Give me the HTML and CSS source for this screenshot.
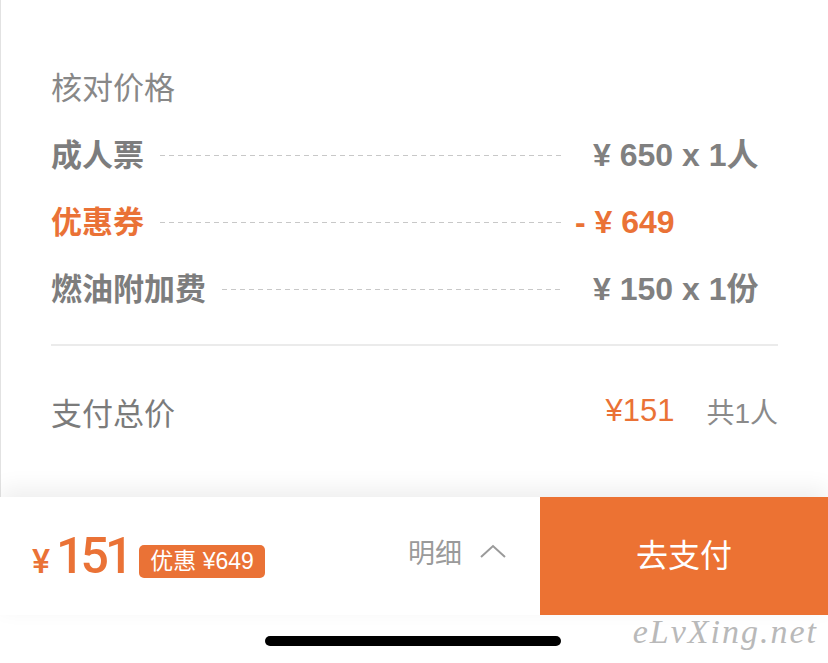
FILE: index.html
```html
<!DOCTYPE html>
<html lang="zh-CN">

<head>
    <meta charset="UTF-8">
    <meta name="viewport" content="width=device-width, initial-scale=1.0">
    <title>核对价格</title>
    <link rel="stylesheet" href="styles.css">
</head>

<body>
    <div class="page">
        <div class="sheet">
            <h2 class="title">核对价格</h2>

            <div class="row">
                <span class="label">成人票</span>
                <span class="dots"></span>
                <span class="value">¥ 650 x 1人</span>
            </div>
            <div class="row discount">
                <span class="label">优惠券</span>
                <span class="dots"></span>
                <span class="value"><span class="minus">- </span>¥ 649</span>
            </div>
            <div class="row">
                <span class="label">燃油附加费</span>
                <span class="dots"></span>
                <span class="value">¥ 150 x 1份</span>
            </div>

            <div class="divider"></div>

            <div class="total">
                <span class="total-label">支付总价</span>
                <span class="total-price">¥151</span>
                <span class="total-count">共1人</span>
            </div>
        </div>

        <div class="bar">
            <div class="bar-left">
                <span class="price"><span class="yen">¥</span>151</span>
                <span class="badge">优惠 ¥649</span>
            </div>
            <div class="detail">
                明细
                <svg class="chevron" width="26" height="14" viewBox="0 0 26 14">
                    <polyline points="1,13 13,2 25,13" fill="none" stroke="#9a9a9a" stroke-width="2" />
                </svg>
            </div>
            <button class="pay">去支付</button>
        </div>

        <div class="home">
            <div class="indicator"></div>
        </div>

        <div class="watermark">eLvXing.net</div>
    </div>
</body>

</html>
```

FILE: styles.css
```css
body {
    margin: 0;
    background: #ffffff;
    font-family: "Liberation Sans", "Noto Sans CJK SC", sans-serif;
    color: #7d7d7d;
}

.page {
    position: relative;
    width: 828px;
    height: 663px;
    overflow: hidden;
    display: flex;
    flex-direction: column;
}

.sheet {
    height: 497px;
    box-sizing: border-box;
    padding: 56px 50px 0 50px;
    border-left: 1px solid #e2e2e2;
}

.title {
    margin: 0;
    height: 66px;
    line-height: 66px;
    font-size: 31px;
    font-weight: 400;
    color: #888888;
}

.row {
    display: flex;
    align-items: center;
    height: 67px;
    line-height: 67px;
    font-size: 31px;
    font-weight: 700;
    color: #7d7d7d;
}

.row .label {
    white-space: nowrap;
}

.dots {
    flex: 1;
    height: 1px;
    margin: 0 30px 0 16px;
    background-image: linear-gradient(to right, #c8c8c8 56%, transparent 56%);
    background-size: 9px 1px;
}

.value {
    width: 185px;
    white-space: nowrap;
    font-size: 32px;
    color: #808080;
}

.discount,
.discount .value {
    color: #ea7236;
}

.minus {
    margin-left: -18px;
}

.divider {
    height: 2px;
    background: #ebebeb;
    margin-top: 21px;
}

.total {
    display: flex;
    align-items: center;
    height: 130px;
    font-size: 31px;
    color: #7b7b7b;
}

.total-label {
    flex: 1;
}

.total-price {
    color: #ea7236;
    margin-right: 32px;
}

.total-count {
    font-size: 28px;
    color: #8a8a8a;
}

.bar {
    display: flex;
    align-items: stretch;
    height: 118px;
    background: #ffffff;
    box-shadow: 0 -8px 22px rgba(0, 0, 0, 0.07);
    position: relative;
}

.bar-left {
    flex: 1;
    display: flex;
    align-items: center;
    padding-left: 32px;
}

.price {
    font-size: 50px;
    font-weight: 500;
    letter-spacing: -4px;
    color: #ea7236;
    font-family: "Roboto", "Liberation Sans", sans-serif;
}

.yen {
    font-size: 34px;
    margin-right: 6px;
    letter-spacing: 0;
}

.badge {
    margin-left: 10px;
    margin-top: 10px;
    padding: 0 11px;
    height: 33px;
    line-height: 33px;
    background: #ea7236;
    color: #ffffff;
    border-radius: 5px;
    font-size: 23px;
}

.detail {
    display: flex;
    align-items: center;
    gap: 18px;
    padding-right: 34px;
    font-size: 27px;
    color: #9a9a9a;
    padding-bottom: 10px;
}

.pay {
    width: 288px;
    border: none;
    background: #ec7233;
    color: #ffffff;
    font-family: "Noto Sans CJK SC", sans-serif;
    font-size: 32px;
    padding: 0 0 6px 0;
}

.home {
    flex: 1;
    display: flex;
    justify-content: center;
    padding-top: 21px;
}

.indicator {
    width: 296px;
    height: 10px;
    border-radius: 5px;
    background: #000000;
    margin-left: -3px;
}

.watermark {
    position: absolute;
    right: 10px;
    bottom: 12px;
    font-family: "Liberation Serif", serif;
    font-style: italic;
    font-size: 34px;
    letter-spacing: 2px;
    color: #b9b9b9;
}
```
